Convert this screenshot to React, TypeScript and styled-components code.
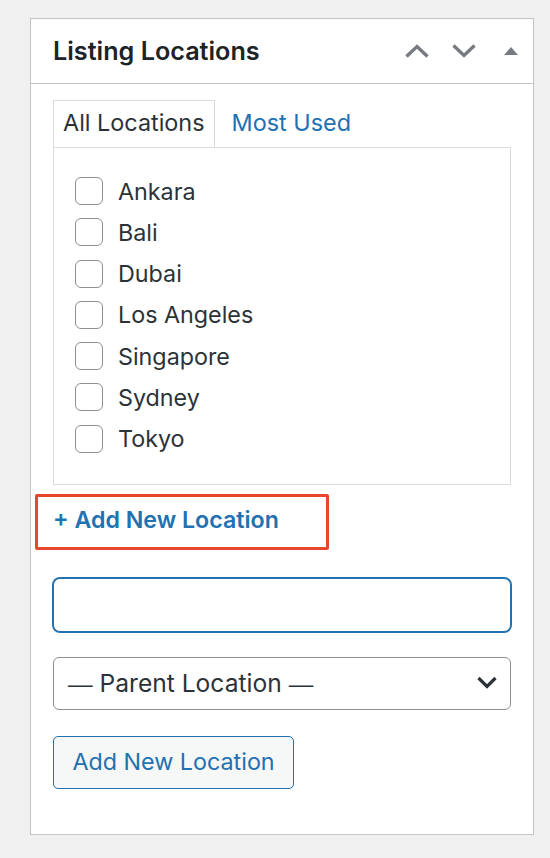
import * as React from "react"
import styled, { createGlobalStyle } from "styled-components"

const GlobalStyle = createGlobalStyle`
  html, body {
    margin: 0;
    padding: 0;
    background: #f0f0f1;
  }
  body {
    font-family: Inter, "Noto Sans", "Liberation Sans", sans-serif;
    color: #2c3338;
  }
`

const Page = styled.div`
  padding: 18px 0 0 30px;
  width: 504px;
`

const Box = styled.div`
  background: #fff;
  border: 1px solid #c3c4c7;
  width: 504px;
  box-sizing: border-box;
`

const Header = styled.div`
  display: flex;
  align-items: center;
  height: 64px;
  border-bottom: 1px solid #c3c4c7;
  padding-left: 22px;
`

const Title = styled.h2`
  flex: 1;
  margin: 0 0 1px;
  font-size: 25.2px;
  font-weight: 600;
  color: #1d2327;
`

const Handles = styled.div`
  display: flex;
  gap: 3px;
`

const HandleButton = styled.button`
  width: 44px;
  height: 44px;
  padding: 0;
  border: 0;
  background: none;
  display: flex;
  align-items: center;
  justify-content: center;
  color: #787c82;
`

const Inside = styled.div`
  padding: 16px 22px 45px;
  display: flex;
  flex-direction: column;
  align-items: flex-start;
`

const Tabs = styled.div`
  display: flex;
  align-items: flex-end;
`

const Tab = styled.div<{ $active?: boolean }>`
  height: 47px;
  box-sizing: border-box;
  display: flex;
  align-items: center;
  padding: 0 9px 4px 9px;
  margin-right: ${(p) => (p.$active ? "7px" : "0")};
  font-size: 23.4px;
  border: 1px solid ${(p) => (p.$active ? "#dcdcde" : "transparent")};
  border-bottom: 0;
  background: ${(p) => (p.$active ? "#fff" : "transparent")};
  color: ${(p) => (p.$active ? "#2c3338" : "#2271b1")};
`

const TabPanel = styled.div`
  align-self: stretch;
  border: 1px solid #dcdcde;
  padding: 29px 0 31px 21px;
  display: flex;
  flex-direction: column;
  gap: 13.3px;
`

const Row = styled.label`
  display: flex;
  align-items: center;
  height: 28px;
  font-size: 23.3px;
  color: #2c3338;
`

const Check = styled.input`
  appearance: none;
  margin: 0 15px 0 0;
  width: 28px;
  height: 28px;
  box-sizing: border-box;
  border: 1px solid #8c8f94;
  border-radius: 6px;
  background: #fff;
`

const Highlight = styled.div`
  margin: 9px 0 0 -18px;
  width: 294px;
  height: 56px;
  box-sizing: border-box;
  border: 3px solid #e9472c;
  border-radius: 2px;
  display: flex;
  align-items: center;
  padding: 0 0 3px 15px;
`

const AddLink = styled.a`
  font-size: 23.2px;
  font-weight: 600;
  color: #2271b1;
  text-decoration: none;
`

const TextField = styled.input`
  margin-top: 28px;
  align-self: stretch;
  height: 54px;
  box-sizing: border-box;
  border: 1px solid #2271b1;
  box-shadow: 0 0 0 1px #2271b1;
  border-radius: 7px;
  outline: none;
  background: #fff;
`

const SelectBox = styled.div`
  margin-top: 25px;
  align-self: stretch;
  height: 53px;
  box-sizing: border-box;
  border: 1px solid #8c8f94;
  border-radius: 6px;
  display: flex;
  align-items: center;
  justify-content: space-between;
  padding: 0 13px 1px 14px;
  font-size: 24.6px;
  color: #2c3338;
`

const Dash = styled.span`
  font-family: "Liberation Sans", sans-serif;
`

const Button = styled.button`
  margin-top: 26px;
  height: 53px;
  width: 241px;
  box-sizing: border-box;
  border: 1px solid #2271b1;
  border-radius: 5px;
  background: #f6f7f7;
  color: #2271b1;
  font-family: inherit;
  font-size: 23.3px;
  padding: 0 0 2px;
`

const locations = ["Ankara", "Bali", "Dubai", "Los Angeles", "Singapore", "Sydney", "Tokyo"]

const ChevronUp = () => (
  <svg width="24" height="14" viewBox="0 0 24 14">
    <polyline points="1.5,12.5 12,2.5 22.5,12.5" fill="none" stroke="currentColor" strokeWidth="3.4" />
  </svg>
)

const ChevronDown = () => (
  <svg width="24" height="14" viewBox="0 0 24 14">
    <polyline points="1.5,1.5 12,11.5 22.5,1.5" fill="none" stroke="currentColor" strokeWidth="3.4" />
  </svg>
)

const Triangle = () => (
  <svg width="14" height="8" viewBox="0 0 14 8">
    <polygon points="0,8 7,0 14,8" fill="currentColor" />
  </svg>
)

export default function App() {
  return (
    <Page>
      <GlobalStyle />
      <Box>
        <Header>
          <Title>Listing Locations</Title>
          <Handles>
            <HandleButton><ChevronUp /></HandleButton>
            <HandleButton><ChevronDown /></HandleButton>
            <HandleButton><Triangle /></HandleButton>
          </Handles>
        </Header>
        <Inside>
          <Tabs>
            <Tab $active>All Locations</Tab>
            <Tab>Most Used</Tab>
          </Tabs>
          <TabPanel>
            {locations.map((name) => (
              <Row key={name}>
                <Check type="checkbox" />
                {name}
              </Row>
            ))}
          </TabPanel>
          <Highlight>
            <AddLink href="#">+ Add New Location</AddLink>
          </Highlight>
          <TextField type="text" />
          <SelectBox>
            <span>
              <Dash>—</Dash> Parent Location <Dash>—</Dash>
            </span>
            <svg width="20" height="13" viewBox="0 0 20 13">
              <polyline points="1.5,2 10,10.5 18.5,2" fill="none" stroke="#2c3338" strokeWidth="3.2" />
            </svg>
          </SelectBox>
          <Button>Add New Location</Button>
        </Inside>
      </Box>
    </Page>
  )
}
